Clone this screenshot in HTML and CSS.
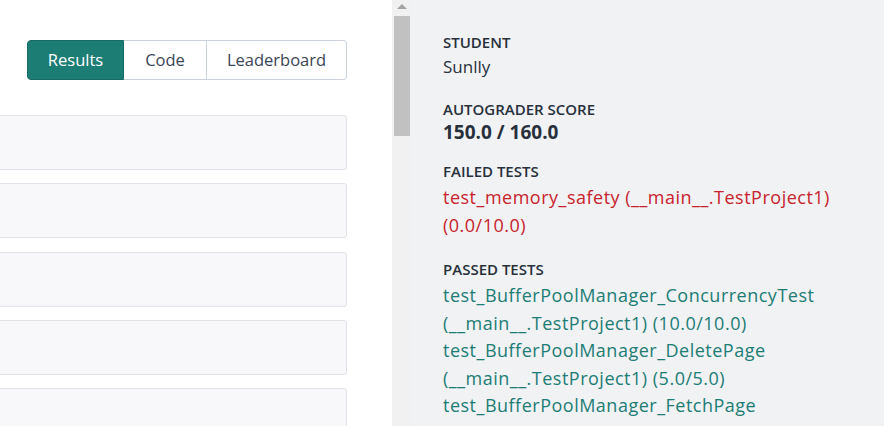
FILE: index.html
```html
<!DOCTYPE html>
<html>
<head>
<meta charset="utf-8">
<link rel="stylesheet" href="styles.css">
</head>
<body>
<div class="page">
  <div class="main">
    <div class="tabs">
      <div class="tab tab-active">Results</div>
      <div class="tab tab-code">Code</div>
      <div class="tab tab-board">Leaderboard</div>
    </div>
    <div class="cards">
      <div class="card"></div>
      <div class="card"></div>
      <div class="card"></div>
      <div class="card"></div>
      <div class="card"></div>
    </div>
  </div>
  <div class="scrollbar">
    <div class="arrow"></div>
    <div class="thumb"></div>
  </div>
  <div class="side">
    <div class="label">STUDENT</div>
    <div class="value">Sunlly</div>
    <div class="label l2">AUTOGRADER SCORE</div>
    <div class="score">150.0 / 160.0</div>
    <div class="label l3">FAILED TESTS</div>
    <div class="tests failed">test_memory_safety (__main__.TestProject1) (0.0/10.0)</div>
    <div class="label l4">PASSED TESTS</div>
    <div class="tests passed">
      <div>test_BufferPoolManager_ConcurrencyTest (__main__.TestProject1) (10.0/10.0)</div>
      <div>test_BufferPoolManager_DeletePage (__main__.TestProject1) (5.0/5.0)</div>
      <div>test_BufferPoolManager_FetchPage (__main__.TestProject1) (5.0/5.0)</div>
    </div>
  </div>
</div>
</body>
</html>
```

FILE: styles.css
```css
html, body {
  margin: 0;
  padding: 0;
  background: #ffffff;
  font-family: "Open Sans", Lato, sans-serif;
}
.page {
  display: flex;
  width: 884px;
  height: 426px;
  overflow: hidden;
}
.main {
  width: 392px;
  flex: none;
  padding-top: 40px;
  box-sizing: border-box;
  padding-right: 45px;
}
.tabs {
  display: flex;
  justify-content: flex-end;
  height: 40px;
}
.tab {
  display: flex;
  align-items: center;
  justify-content: center;
  box-sizing: border-box;
  height: 40px;
  padding-bottom: 2px;
  font-size: 16.5px;
  color: #3a4655;
  border: 1px solid #ccd2da;
  border-left: none;
  background: #fff;
}
.tab-active {
  width: 97px;
  background: #1c7d75;
  border: 1px solid #176b64;
  color: #ffffff;
  border-radius: 4px 0 0 4px;
}
.tab-code {
  width: 83px;
}
.tab-board {
  width: 140px;
  border-radius: 0 4px 4px 0;
}
.cards {
  margin-top: 35px;
  margin-left: -20px;
  display: flex;
  flex-direction: column;
  gap: 13.25px;
}
.card {
  height: 55px;
  box-sizing: border-box;
  background: #f8f8fa;
  border: 1px solid #e2e2e8;
  border-radius: 3px;
}
.scrollbar {
  width: 20px;
  flex: none;
  background: #f1f1f1;
  display: flex;
  flex-direction: column;
  align-items: center;
  padding-top: 4px;
  box-sizing: border-box;
}
.arrow {
  width: 0;
  height: 0;
  border-left: 5px solid transparent;
  border-right: 5px solid transparent;
  border-bottom: 5px solid #a3a3a3;
}
.thumb {
  margin-top: 7px;
  width: 16px;
  height: 120px;
  background: #c1c1c1;
}
.side {
  flex: 1;
  background: #f1f2f4;
  padding: 33px 0 0 31px;
  box-sizing: border-box;
}
.label {
  font-size: 15px;
  font-weight: 600;
  color: #27303b;
  line-height: 18px;
}
.value {
  margin-top: 2px;
  font-size: 17px;
  color: #27303b;
  line-height: 27px;
}
.l2 { margin-top: 19.5px; }
.score {
  margin-top: 3.3px;
  font-size: 19px;
  font-weight: 700;
  color: #27303b;
  line-height: 22px;
}
.l3 { margin-top: 19.3px; }
.tests {
  margin-top: 4px;
  font-size: 18px;
  letter-spacing: 0.5px;
  line-height: 27.5px;
}
.failed {
  color: #c8232c;
  width: 410px;
}
.l4 { margin-top: 21px; }
.passed {
  color: #1c7d75;
  width: 410px;
}
```
